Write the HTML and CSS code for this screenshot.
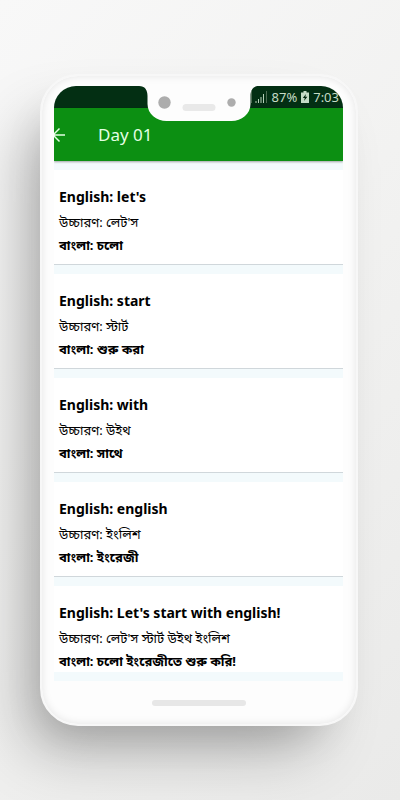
FILE: index.html
```html
<!DOCTYPE html>
<html lang="bn">
<head>
<meta charset="utf-8">
<meta name="viewport" content="width=device-width, initial-scale=1">
<title>Day 01</title>
<link rel="stylesheet" href="styles.css">
</head>
<body>
<div class="phone">
  <div class="screen">
    <div class="status">
      <svg class="signals" width="20" height="12" viewBox="0 0 20 12" aria-hidden="true">
        <path d="M1 1v11M3.500 0v12" stroke="#4c6b52"/>
        <path d="M8 10v2M10.500 8v4M13 6v6M15.500 3v9" stroke="#b5d0b8"/>
        <path d="M18.500 0v12" stroke="#4c6b52"/>
      </svg>
      <span>87%</span>
      <svg width="8" height="12" viewBox="0 0 8 12" aria-hidden="true">
        <path d="M2.500 0h3v1.500H8V12H0V1.500h2.500z" fill="#c5dcc6"/>
        <path d="M5 3L1.800 7h2L3 10l3.400-4.200H4.300z" fill="#03270f"/>
      </svg>
      <span>7:03</span>
    </div>
    <header class="appbar">
      <button class="back" aria-label="Back">
        <svg width="14" height="16" viewBox="0 0 14 16" aria-hidden="true"><path d="M13 8H1.500M7.500 1.500L1 8l6.500 6.500" fill="none" stroke="#e4ffe4" stroke-width="1.500"/></svg>
      </button>
      <h1>Day 01</h1>
    </header>
    <svg class="notch" width="120" height="36" viewBox="0 0 120 36" aria-hidden="true">
      <path d="M0 0c6 0 8.500 4 8.500 10v8c0 10 9 17 19 17h65c10 0 19-7 19-17v-8c0-6 2.500-10 8.500-10z" fill="#fdfdfd"/>
      <circle cx="25.500" cy="16.500" r="6.200" fill="#adadad"/>
      <rect x="43.500" y="18" width="33" height="7" rx="3.500" fill="#e9e9e9"/>
      <circle cx="92.500" cy="16.500" r="4.200" fill="#adadad"/>
    </svg>
    <main class="list">
      <article class="card"><h2>English: let's</h2><p>উচ্চারণ: লেট'স</p><p class="meaning">বাংলা: চলো</p></article>
      <article class="card"><h2>English: start</h2><p>উচ্চারণ: স্টার্ট</p><p class="meaning">বাংলা: শুরু করা</p></article>
      <article class="card"><h2>English: with</h2><p>উচ্চারণ: উইথ</p><p class="meaning">বাংলা: সাথে</p></article>
      <article class="card"><h2>English: english</h2><p>উচ্চারণ: ইংলিশ</p><p class="meaning">বাংলা: ইংরেজী</p></article>
      <article class="card last"><h2>English: Let's start with english!</h2><p>উচ্চারণ: লেট'স স্টার্ট উইথ ইংলিশ</p><p class="meaning">বাংলা: চলো ইংরেজীতে শুরু করি!</p></article>
    </main>
  </div>
  <div class="chin"><div class="speaker"></div></div>
</div>
</body>
</html>
```
FILE: styles.css
```css
* { box-sizing: border-box; }

body {
  margin: 0;
  min-height: 100vh;
  padding: 74px 42px 72px 40px;
  background: linear-gradient(135deg, #f8f8f8 0%, #f2f2f1 45%, #eaeae9 100%);
  font-family: "Noto Sans", "Noto Sans Bengali", "Liberation Sans", sans-serif;
  color: #000;
  overflow-x: hidden;
}

.phone {
  padding: 10px 13px 0 12px;
  border: 2px solid #f7f7f7;
  border-radius: 38px;
  background: #fdfdfd;
  box-shadow:
    inset 0 0 9px rgba(0, 0, 0, 0.1),
    -28px 36px 64px -16px rgba(0, 0, 0, 0.3),
    -12px 24px 40px -16px rgba(0, 0, 0, 0.1);
}

.screen {
  position: relative;
  overflow: hidden;
  border-radius: 22px 22px 0 0;
  background: #f3fafc;
}

.status {
  display: flex;
  align-items: center;
  justify-content: flex-end;
  gap: 4px;
  height: 22px;
  padding-right: 4px;
  background: #032f13;
  color: #c5dcc6;
  font-size: 13px;
}

.appbar {
  display: flex;
  align-items: center;
  height: 53px;
  background: #0c8f12;
  box-shadow: 0 1px 2px rgba(0, 0, 0, 0.35);
}

.back {
  display: flex;
  width: 46px;
  margin-left: -2px;
  padding: 0;
  border: 0;
  background: none;
}

h1 {
  margin: 0;
  color: #e4ffe4;
  font-size: 17px;
  font-weight: 400;
}

.notch {
  position: absolute;
  top: 0;
  left: 50%;
  transform: translateX(-50%);
}

.list {
  display: flex;
  flex-direction: column;
  gap: 9px;
  padding: 9px 0;
}

.card {
  padding: 14px 5px 8px;
  background: #fff;
  border-bottom: 1px solid #d0d7db;
}

.card.last {
  padding-bottom: 0;
  border-bottom: 0;
}

.card h2 {
  margin: 0;
  font-size: 14px;
  line-height: 26px;
}

.card p {
  margin: 0;
  font-size: 13px;
  line-height: 24px;
}

.card .meaning {
  font-weight: 700;
  line-height: 22px;
}

.chin {
  display: flex;
  align-items: center;
  justify-content: center;
  height: 43px;
}

.speaker {
  width: 94px;
  height: 6px;
  border-radius: 3px;
  background: #e7e7e7;
}
```
